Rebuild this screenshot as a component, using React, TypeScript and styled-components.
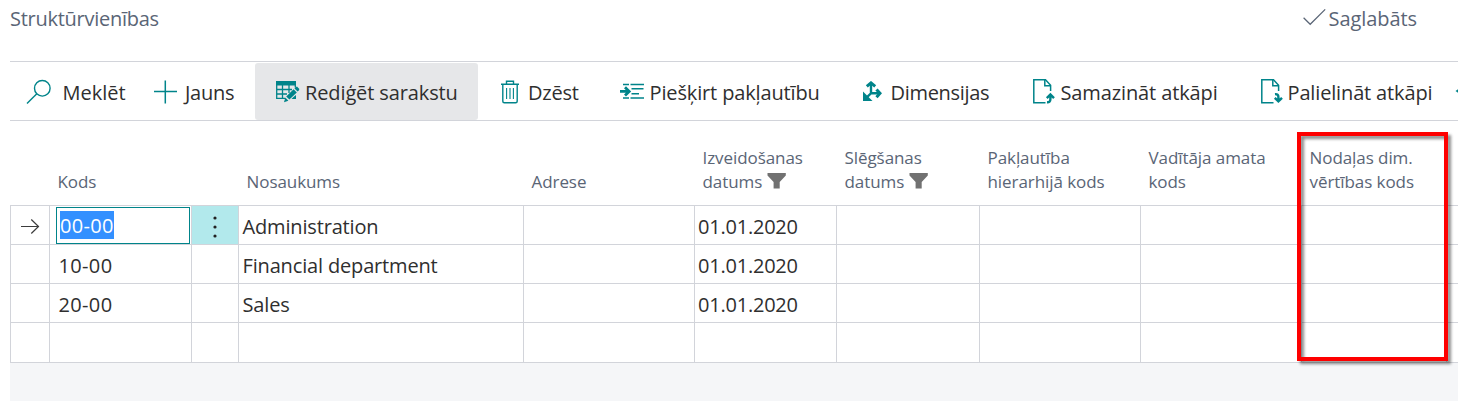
import React from "react";
import styled, { createGlobalStyle } from "styled-components";

const line = "#d2d4da";
const teal = "#00848a";
const slate = "#5a6576";
const ink = "#2f2f2f";

const GlobalStyle = createGlobalStyle`
  * { box-sizing: border-box; }
  body {
    margin: 0;
    background: #fff;
    font-family: "Open Sans", "Noto Sans", sans-serif;
    font-weight: 400;
    font-size: 20px;
    color: ${ink};
    overflow: hidden;
  }
`;

const Page = styled.main`
  height: 401px;
  padding-left: 10px;
  display: flex;
  flex-direction: column;
  overflow: hidden;
`;

const TitleBar = styled.header`
  flex: none;
  height: 61px;
  padding-right: 41px;
  display: flex;
  justify-content: space-between;
  color: ${slate};
  line-height: 38px;
`;

const Label = styled.span<{ $ls?: number }>`
  letter-spacing: ${(p) => p.$ls ?? 0}px;
  white-space: nowrap;
`;

const SaveStatus = styled.div`
  display: flex;
  gap: 3px;
  svg { margin-top: 9px; }
`;

const Toolbar = styled.nav`
  flex: none;
  height: 60px;
  border-top: 1px solid ${line};
  border-bottom: 1px solid ${line};
  display: grid;
  grid-template-columns: 144px 101px 236px 129px 243px 170px 228px 194px 1fr;
`;

const Action = styled.button<{ $pad?: number; $gap?: number; $active?: boolean }>`
  height: 57px;
  width: ${(p) => (p.$active ? "223px" : "auto")};
  margin-top: 1px;
  padding: 0 0 0 ${(p) => p.$pad ?? 0}px;
  display: flex;
  align-items: center;
  gap: ${(p) => p.$gap ?? 6}px;
  border: 0;
  border-radius: 3px;
  background: ${(p) => (p.$active ? "#e6e7e9" : "transparent")};
  color: inherit;
  font: inherit;
  svg { flex: none; }
  ${Label} { padding-top: 2px; }
`;

const columns = "39px 142px 47px 285px 171px 142px 143px 161px 161px 145px 1fr";

const Grid = styled.section`
  flex: none;
  height: 242px;
`;

const HeadRow = styled.div`
  height: 84px;
  display: grid;
  grid-template-columns: ${columns};
  align-items: end;
  padding-bottom: 11px;
`;

const HeadCell = styled.div`
  display: flex;
  flex-direction: column;
  padding-left: 8.5px;
  font-size: 17px;
  line-height: 24px;
  color: ${slate};
`;

const HeadLine = styled.div`
  display: flex;
  gap: 5px;
  svg { margin-top: 3px; }
`;

const Row = styled.div<{ $last?: boolean }>`
  height: ${(p) => (p.$last ? 41 : 39)}px;
  display: grid;
  grid-template-columns: ${columns};
  border-top: 1px solid ${line};
  border-bottom: ${(p) => (p.$last ? `1px solid ${line}` : "0")};
`;

const Cell = styled.div<{ $pad?: number; $menu?: boolean }>`
  min-width: 0;
  border-left: 1px solid ${line};
  padding-left: ${(p) => p.$pad ?? 3}px;
  display: flex;
  align-items: center;
  padding-top: 3px;
  background: ${(p) => (p.$menu ? "#b2e9ec" : "transparent")};
`;

const CodeInput = styled.div`
  width: 134px;
  height: 37px;
  margin-top: -2px;
  padding: 0 0 1px 3px;
  border: 1px solid ${teal};
  display: flex;
  align-items: center;
`;

const Selection = styled.span`
  height: 28px;
  line-height: 30px;
  background: #3390ff;
  color: #fff;
  letter-spacing: 0.3px;
`;

const Footer = styled.footer`
  flex: 1;
  background: #f5f6f8;
`;

const Highlight = styled.div`
  position: absolute;
  left: 1297px;
  top: 132px;
  width: 151px;
  height: 229px;
  border: 4px solid #fe0000;
  filter: drop-shadow(3px 3px 1.5px rgba(0, 0, 0, 0.45));
`;

const SearchIcon = () => (
  <svg width="25" height="26" viewBox="0 0 25 26" fill="none" stroke={teal} strokeWidth="1.4">
    <circle cx="16.3" cy="9.3" r="7.8" />
    <path d="M10.8 14.8 1 24.6" />
  </svg>
);
const PlusIcon = () => (
  <svg width="23" height="24" viewBox="0 0 23 24" stroke={teal} strokeWidth="1.5">
    <path d="M11.3 0.5V23.5M0 11.5H23" />
  </svg>
);
const EditListIcon = () => (
  <svg width="24" height="22" viewBox="0 0 24 22">
    <path fill={teal} d="M0 0H20V4.5H0Z" />
    <path fill="none" stroke={teal} strokeWidth="1.3" d="M.7 4V17.3H9M.7 8.5H16M.7 13H11M6.5 4V17.3M13 4V12M19.3 4V6.5" />
    <path fill={teal} d="M19.5 6.2 21 5.6 23.4 8 22.8 9.6 21.6 10.5 18.5 7.4ZM17.6 8.2 20.8 11.4 13.4 18.6 10.2 15.4ZM9.3 16.5 12.4 19.7 8 21.2ZM15.5 18H20V14L17.5 16Z" />
  </svg>
);
const TrashIcon = () => (
  <svg width="18" height="24" viewBox="0 0 18 24" fill="none" stroke={teal} strokeWidth="1.4">
    <path d="M0 4.2H18M5.5 4V1.2H12.5V4M1.8 4.5V21.3Q1.8 22.8 3.3 22.8H14.7Q16.2 22.8 16.2 21.3V4.5" />
    <path strokeWidth="1.1" d="M5.6 8V19M9 8V19M12.4 8V19" />
  </svg>
);
const AssignIcon = () => (
  <svg width="24" height="17" viewBox="0 0 24 17" stroke={teal} fill="none">
    <path strokeWidth="1.6" d="M3 1.5H9M10.5 1.5H24M11.5 5.8H23.5M11.5 10.8H19M3 15H9M10.5 15H24" />
    <path strokeWidth="2.8" d="M0 8.4H9M5 4.2 9.2 8.4 5 12.6" />
  </svg>
);
const DimensionsIcon = () => (
  <svg width="19" height="21" viewBox="0 0 19 21" stroke={teal} fill={teal}>
    <path fill="none" strokeWidth="2.4" d="M8 3V12.3L3 17.2M8 12.3H15" />
    <path fill="none" strokeWidth="3" d="M3.8 5.4 8 1.9 12.2 5.4M13.5 8.4 17 12.3 13.5 16.2" />
    <path stroke="none" d="M0 10.5V20H9.5Z" />
  </svg>
);
const PageIcon = ({ down }: { down?: boolean }) => (
  <svg width="22" height="25" viewBox="0 0 22 25" fill="none" stroke={teal} strokeWidth="1.5">
    <path d="M12.5 23.8H.8V.8H12.5L17.6 6.2V12" />
    <path d="M11.8 1V6.8H17.5" />
    {down ? (
      <path strokeWidth="2.4" d="M14 15.2Q17.4 14.8 17.4 18V22.5M13.8 18.8 17.4 22.4 21 18.8" />
    ) : (
      <path strokeWidth="2.4" d="M14 23.3Q17.4 23.6 17.4 20V15.7M13.8 19.1 17.4 15.5 21 19.1" />
    )}
  </svg>
);
const CheckIcon = () => (
  <svg width="23" height="18" viewBox="0 0 23 18" fill="none" stroke={slate} strokeWidth="1.2">
    <path d="M.6 8.8 7.2 15.3 22.2 .4" />
  </svg>
);
const FilterIcon = () => (
  <svg width="20" height="16" viewBox="0 0 20 16" fill="#717171">
    <path d="M.5 0H18.8V2.5L12.7 9V15.5H6.6V9L.5 2.5Z" />
  </svg>
);
const ArrowIcon = () => (
  <svg width="20" height="16" viewBox="0 0 20 16" fill="none" stroke="#3c3c3c" strokeWidth="1.2">
    <path d="M0 7.5H18M10.3 .5 17.5 7.5 10.3 14.5" />
  </svg>
);
const DotsIcon = () => (
  <svg width="4" height="22" viewBox="0 0 4 22" fill="#212121">
    <circle cx="2" cy="2" r="1.6" />
    <circle cx="2" cy="11" r="1.6" />
    <circle cx="2" cy="20" r="1.6" />
  </svg>
);
const MoreIcon = () => (
  <svg width="12" height="12" viewBox="0 0 12 12" fill={teal}>
    <path d="M.5 5 4 2.5V7.5Z" />
  </svg>
);

type HeadText = { text: string; filter?: boolean };
const heads: HeadText[][] = [
  [],
  [{ text: "Kods" }],
  [],
  [{ text: "Nosaukums" }],
  [{ text: "Adrese" }],
  [{ text: "Izveidošanas" }, { text: "datums", filter: true }],
  [{ text: "Slēgšanas" }, { text: "datums", filter: true }],
  [{ text: "Pakļautība" }, { text: "hierarhijā kods" }],
  [{ text: "Vadītāja amata" }, { text: "kods" }],
  [{ text: "Nodaļas dim." }, { text: "vērtības kods" }],
  [],
];

const rows = [
  { code: "00-00", name: "Administration", date: "01.01.2020", selected: true },
  { code: "10-00", name: "Financial department", date: "01.01.2020" },
  { code: "20-00", name: "Sales", date: "01.01.2020" },
  { code: "", name: "", date: "" },
];

export default function App() {
  return (
    <Page>
      <GlobalStyle />
      <TitleBar>
        <Label $ls={-0.27}>Struktūrvienības</Label>
        <SaveStatus>
          <CheckIcon />
          <Label $ls={-0.07}>Saglabāts</Label>
        </SaveStatus>
      </TitleBar>
      <Toolbar>
        <Action $pad={16} $gap={11.5}><SearchIcon /><Label>Meklēt</Label></Action>
        <Action $gap={8}><PlusIcon /><Label $ls={-0.25}>Jauns</Label></Action>
        <Action $active $pad={21} $gap={5}><EditListIcon /><Label $ls={-0.12}>Rediģēt sarakstu</Label></Action>
        <Action $pad={10} $gap={9}><TrashIcon /><Label $ls={-0.2}>Dzēst</Label></Action>
        <Action $gap={5.5}><AssignIcon /><Label $ls={-0.14}>Piešķirt pakļautību</Label></Action>
        <Action $gap={8.5}><DimensionsIcon /><Label $ls={-0.3}>Dimensijas</Label></Action>
        <Action $gap={5.5}><PageIcon /><Label $ls={-0.12}>Samazināt atkāpi</Label></Action>
        <Action $gap={4.5}><PageIcon down /><Label $ls={-0.15}>Palielināt atkāpi</Label></Action>
        <Action><MoreIcon /></Action>
      </Toolbar>
      <Grid>
        <HeadRow>
          {heads.map((lines, i) => (
            <HeadCell key={i}>
              {lines.map((l) => (
                <HeadLine key={l.text}>
                  <Label $ls={-0.07}>{l.text}</Label>
                  {l.filter && <FilterIcon />}
                </HeadLine>
              ))}
            </HeadCell>
          ))}
        </HeadRow>
        {rows.map((r, i) => (
          <Row key={i} $last={i === rows.length - 1}>
            <Cell $pad={10}>{r.selected && <ArrowIcon />}</Cell>
            <Cell $pad={r.selected ? 6 : 8.5}>
              {r.selected ? (
                <CodeInput><Selection>{r.code}</Selection></CodeInput>
              ) : (
                <Label $ls={0.35}>{r.code}</Label>
              )}
            </Cell>
            <Cell $menu={r.selected} $pad={21}>{r.selected && <DotsIcon />}</Cell>
            <Cell $pad={3.5}><Label $ls={-0.16}>{r.name}</Label></Cell>
            <Cell />
            <Cell><Label $ls={-0.22}>{r.date}</Label></Cell>
            <Cell />
            <Cell />
            <Cell />
            <Cell />
            <Cell />
          </Row>
        ))}
      </Grid>
      <Footer />
      <Highlight />
    </Page>
  );
}
